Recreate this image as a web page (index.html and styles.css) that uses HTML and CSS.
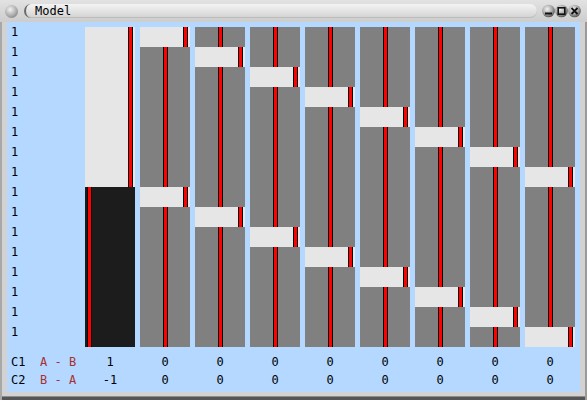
FILE: index.html
```html
<!DOCTYPE HTML>
<html lang="en-US">
<head>
<meta charset="UTF-8">
<title>Model</title>
<link rel="stylesheet" href="styles.css">
</head>
<body>
<div class="window">
	<div class="titlebar">
		<span class="orb"></span>
		<div class="title-pill">Model</div>
		<svg class="controls" width="39" height="14" viewBox="0 0 39 14">
			<defs>
				<radialGradient id="ball" cx="40%" cy="35%" r="65%">
					<stop offset="0" stop-color="#f4f4f4"/>
					<stop offset="0.6" stop-color="#a8a8a8"/>
					<stop offset="1" stop-color="#5a5a5a"/>
				</radialGradient>
			</defs>
			<circle cx="6.5" cy="7" r="6.3" fill="url(#ball)"/>
			<circle cx="19.5" cy="7" r="6.3" fill="url(#ball)"/>
			<circle cx="32.5" cy="7" r="6.3" fill="url(#ball)"/>
			<rect x="3" y="8.5" width="7" height="2" fill="#111"/>
			<rect x="16.2" y="3.8" width="6.6" height="6.4" fill="none" stroke="#111" stroke-width="1.6"/>
			<path d="M29.5 4 L35.5 10 M35.5 4 L29.5 10" stroke="#111" stroke-width="1.8"/>
		</svg>
	</div>
	<div class="frame">
		<div class="content">
			<div class="matrix">
				<div class="labels">
					<div>1</div><div>1</div><div>1</div><div>1</div>
					<div>1</div><div>1</div><div>1</div><div>1</div>
					<div>1</div><div>1</div><div>1</div><div>1</div>
					<div>1</div><div>1</div><div>1</div><div>1</div>
				</div>
				<div class="cols">
					<div class="col">
						<div class="cell lt"></div><div class="cell lt"></div><div class="cell lt"></div><div class="cell lt"></div>
						<div class="cell lt"></div><div class="cell lt"></div><div class="cell lt"></div><div class="cell lt"></div>
						<div class="cell dk"></div><div class="cell dk"></div><div class="cell dk"></div><div class="cell dk"></div>
						<div class="cell dk"></div><div class="cell dk"></div><div class="cell dk"></div><div class="cell dk"></div>
					</div>
					<div class="col">
						<div class="cell lt"></div><div class="cell gr"></div><div class="cell gr"></div><div class="cell gr"></div>
						<div class="cell gr"></div><div class="cell gr"></div><div class="cell gr"></div><div class="cell gr"></div>
						<div class="cell lt"></div><div class="cell gr"></div><div class="cell gr"></div><div class="cell gr"></div>
						<div class="cell gr"></div><div class="cell gr"></div><div class="cell gr"></div><div class="cell gr"></div>
					</div>
					<div class="col">
						<div class="cell gr"></div><div class="cell lt"></div><div class="cell gr"></div><div class="cell gr"></div>
						<div class="cell gr"></div><div class="cell gr"></div><div class="cell gr"></div><div class="cell gr"></div>
						<div class="cell gr"></div><div class="cell lt"></div><div class="cell gr"></div><div class="cell gr"></div>
						<div class="cell gr"></div><div class="cell gr"></div><div class="cell gr"></div><div class="cell gr"></div>
					</div>
					<div class="col">
						<div class="cell gr"></div><div class="cell gr"></div><div class="cell lt"></div><div class="cell gr"></div>
						<div class="cell gr"></div><div class="cell gr"></div><div class="cell gr"></div><div class="cell gr"></div>
						<div class="cell gr"></div><div class="cell gr"></div><div class="cell lt"></div><div class="cell gr"></div>
						<div class="cell gr"></div><div class="cell gr"></div><div class="cell gr"></div><div class="cell gr"></div>
					</div>
					<div class="col">
						<div class="cell gr"></div><div class="cell gr"></div><div class="cell gr"></div><div class="cell lt"></div>
						<div class="cell gr"></div><div class="cell gr"></div><div class="cell gr"></div><div class="cell gr"></div>
						<div class="cell gr"></div><div class="cell gr"></div><div class="cell gr"></div><div class="cell lt"></div>
						<div class="cell gr"></div><div class="cell gr"></div><div class="cell gr"></div><div class="cell gr"></div>
					</div>
					<div class="col">
						<div class="cell gr"></div><div class="cell gr"></div><div class="cell gr"></div><div class="cell gr"></div>
						<div class="cell lt"></div><div class="cell gr"></div><div class="cell gr"></div><div class="cell gr"></div>
						<div class="cell gr"></div><div class="cell gr"></div><div class="cell gr"></div><div class="cell gr"></div>
						<div class="cell lt"></div><div class="cell gr"></div><div class="cell gr"></div><div class="cell gr"></div>
					</div>
					<div class="col">
						<div class="cell gr"></div><div class="cell gr"></div><div class="cell gr"></div><div class="cell gr"></div>
						<div class="cell gr"></div><div class="cell lt"></div><div class="cell gr"></div><div class="cell gr"></div>
						<div class="cell gr"></div><div class="cell gr"></div><div class="cell gr"></div><div class="cell gr"></div>
						<div class="cell gr"></div><div class="cell lt"></div><div class="cell gr"></div><div class="cell gr"></div>
					</div>
					<div class="col">
						<div class="cell gr"></div><div class="cell gr"></div><div class="cell gr"></div><div class="cell gr"></div>
						<div class="cell gr"></div><div class="cell gr"></div><div class="cell lt"></div><div class="cell gr"></div>
						<div class="cell gr"></div><div class="cell gr"></div><div class="cell gr"></div><div class="cell gr"></div>
						<div class="cell gr"></div><div class="cell gr"></div><div class="cell lt"></div><div class="cell gr"></div>
					</div>
					<div class="col">
						<div class="cell gr"></div><div class="cell gr"></div><div class="cell gr"></div><div class="cell gr"></div>
						<div class="cell gr"></div><div class="cell gr"></div><div class="cell gr"></div><div class="cell lt"></div>
						<div class="cell gr"></div><div class="cell gr"></div><div class="cell gr"></div><div class="cell gr"></div>
						<div class="cell gr"></div><div class="cell gr"></div><div class="cell gr"></div><div class="cell lt"></div>
					</div>
				</div>
			</div>
			<div class="totals">
				<div class="trow">
					<div class="tname"><span>C1</span><em>A - B</em></div>
					<div class="tvals"><span>1</span><span>0</span><span>0</span><span>0</span><span>0</span><span>0</span><span>0</span><span>0</span><span>0</span></div>
				</div>
				<div class="trow">
					<div class="tname"><span>C2</span><em>B - A</em></div>
					<div class="tvals"><span>-1</span><span>0</span><span>0</span><span>0</span><span>0</span><span>0</span><span>0</span><span>0</span><span>0</span></div>
				</div>
			</div>
		</div>
	</div>
</div>
</body>
</html>
```

FILE: styles.css
```css
html, body, div { margin:0; padding:0; }
body { width:587px; height:400px; overflow:hidden; font:normal 12px "DejaVu Sans Mono","Liberation Mono",monospace; color:#000; background:#c8c8c8; }

/* window chrome */
.window { display:flex; flex-direction:column; width:587px; height:400px; }
.titlebar { display:flex; align-items:center; height:22px; padding:0 6px 0 5px; box-sizing:border-box; background:linear-gradient(#e2e2e2, #cdcdcd); }
.orb { width:13px; height:13px; border-radius:50%; background:radial-gradient(circle at 40% 35%, #f2f2f2, #a4a4a4 60%, #5c5c5c); }
.title-pill { flex:1; height:14px; margin:0 5px 0 6px; padding-left:9px; line-height:14px; border-left:2px solid #6a6a6a; border-radius:8px; background:linear-gradient(#f4f4f4, #d2d2d2); box-shadow:inset 0 -1px 0 #bcbcbc; }
.controls { display:block; }

.frame { flex:1; display:flex; padding:0 7px 8px; background:#d2d2d2; box-shadow:inset 2px 0 0 #a8a8a8, inset -2px 0 0 #9a9a9a, inset 0 -3px 0 #555, inset 0 -4px 0 #8c8c8c; }
.content { flex:1; background:#b4d8ff; }

/* matrix */
.matrix { display:flex; padding-top:5px; }
.labels { width:78px; margin-top:-2px; padding-left:4px; box-sizing:border-box; }
.labels div { height:20px; line-height:14px; }
.cols { display:flex; gap:5px; }
.col { display:flex; flex-direction:column; width:50px; }
.cell { display:flex; height:20px; }
.cell::before { content:""; width:3px; background:#f00; border-left:1px solid #000; border-right:1px solid #000; }
.lt { background:#e6e6e6; }
.lt::before { margin-left:43px; }
.gr { background:#808080; }
.gr::before { margin-left:23px; }
.dk { background:#1c1c1c; }
.dk::before { margin-left:2px; }

/* totals */
.totals { margin-top:6px; }
.trow { display:flex; height:18px; line-height:18px; }
.tname { width:78px; padding-left:4px; box-sizing:border-box; display:flex; }
.tname span { width:29px; }
.tname em { font-style:normal; color:#a83030; white-space:pre; }
.tvals { display:flex; gap:5px; }
.tvals span { width:50px; text-align:center; }
```
